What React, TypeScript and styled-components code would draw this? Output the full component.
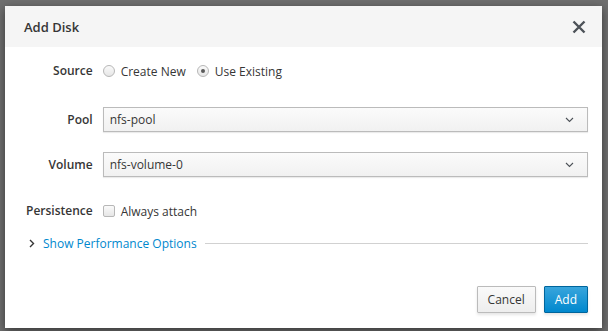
import React from "react";
import styled, { createGlobalStyle } from "styled-components";

const Global = createGlobalStyle`
  html, body { margin: 0; padding: 0; }
  body {
    background: #6f6f6f;
    font-family: "Open Sans", "Liberation Sans", sans-serif;
    font-size: 12px;
    color: #363636;
  }
`;

const Backdrop = styled.div`
  height: 331px;
  box-sizing: border-box;
  padding: 6px 6px 3px 5px;
  background: #6f6f6f;
  overflow: hidden;
`;

const Modal = styled.div`
  height: 322px;
  background: #fff;
  box-shadow: 0 3px 9px rgba(0, 0, 0, 0.5);
  display: flex;
  flex-direction: column;
`;

const Header = styled.div`
  height: 41px;
  box-sizing: border-box;
  background: #f5f5f5;
  display: flex;
  align-items: center;
  justify-content: space-between;
  padding: 0 15px 0 19px;
`;

const Title = styled.h1`
  margin: 0;
  font-size: 13px;
  font-weight: 600;
  color: #363636;
`;

const Close = styled.button`
  border: 0;
  background: none;
  padding: 0;
  width: 16px;
  height: 16px;
  display: flex;
  align-items: center;
  justify-content: center;
  cursor: pointer;
`;

const Body = styled.div`
  flex: 1;
  padding: 12px 14px 0 21px;
`;

const Form = styled.div`
  display: grid;
  grid-template-columns: max-content 1fr;
  column-gap: 10px;
  align-items: center;
`;

const Label = styled.label<{ $gap: number }>`
  text-align: right;
  margin-top: ${(p) => p.$gap}px;
  line-height: 24px;
  font-weight: 600;
  color: #363636;
`;

const Control = styled.div<{ $gap: number }>`
  margin-top: ${(p) => p.$gap}px;
  display: flex;
  align-items: center;
  min-height: 24px;
`;

const Option = styled.span`
  display: inline-flex;
  align-items: center;
  gap: 6px;
  margin-right: 11px;
`;

const Radio = styled.span<{ $checked?: boolean }>`
  width: 12px;
  height: 12px;
  box-sizing: border-box;
  border-radius: 50%;
  border: 1px solid #b7b7b7;
  background: linear-gradient(#fafafa, #e6e6e6);
  display: inline-flex;
  align-items: center;
  justify-content: center;
  &::after {
    content: "";
    width: 4px;
    height: 4px;
    border-radius: 50%;
    background: ${(p) => (p.$checked ? "#5a5a5a" : "transparent")};
  }
`;

const Checkbox = styled.span`
  width: 12px;
  height: 12px;
  box-sizing: border-box;
  border-radius: 2px;
  border: 1px solid #b7b7b7;
  background: linear-gradient(#fafafa, #e6e6e6);
`;

const Select = styled.div`
  flex: 1;
  height: 25px;
  box-sizing: border-box;
  border: 1px solid #bbb;
  background: linear-gradient(#fbfbfb, #f1f1f1);
  box-shadow: 0 1px 1px rgba(3, 3, 3, 0.08);
  display: flex;
  align-items: center;
  justify-content: space-between;
  padding: 0 13px 0 6px;
  color: #363636;
`;

const Expander = styled.div`
  display: flex;
  align-items: center;
  margin-top: 12px;
  padding-left: 3px;
`;

const Link = styled.a`
  color: #0088ce;
  text-decoration: none;
  margin-left: 8px;
  margin-right: 8px;
`;

const Rule = styled.div`
  flex: 1;
  height: 1px;
  background: #d1d1d1;
`;

const Footer = styled.div`
  display: flex;
  justify-content: flex-end;
  gap: 8px;
  padding: 0 14px 15px 0;
`;

const Button = styled.button<{ $primary?: boolean }>`
  height: 27px;
  box-sizing: border-box;
  padding: 0 10px;
  font-family: "Open Sans", "Liberation Sans", sans-serif;
  font-size: 12px;
  border-radius: 1px;
  border: 1px solid ${(p) => (p.$primary ? "#00659c" : "#bbb")};
  color: ${(p) => (p.$primary ? "#fff" : "#363636")};
  background: ${(p) =>
    p.$primary
      ? "linear-gradient(#39a5dc, #0088ce)"
      : "linear-gradient(#fafafa, #ededed)"};
  box-shadow: 0 2px 3px rgba(3, 3, 3, 0.1);
`;

const Chevron = () => (
  <svg width="9" height="6" viewBox="0 0 9 6">
    <path d="M1 1 L4.5 4.5 L8 1" fill="none" stroke="#4d5258" strokeWidth="1.1" />
  </svg>
);

export default function App() {
  return (
    <>
      <Global />
      <Backdrop>
        <Modal>
          <Header>
            <Title>Add Disk</Title>
            <Close aria-label="Close">
              <svg width="14" height="14" viewBox="0 0 14 14">
                <path d="M1.5 1.5 L12.5 12.5 M12.5 1.5 L1.5 12.5" stroke="#4d5258" strokeWidth="2.4" />
              </svg>
            </Close>
          </Header>
          <Body>
            <Form>
              <Label $gap={0}>Source</Label>
              <Control $gap={0}>
                <Option>
                  <Radio />
                  Create New
                </Option>
                <Option>
                  <Radio $checked />
                  Use Existing
                </Option>
              </Control>
              <Label $gap={24}>Pool</Label>
              <Control $gap={24}>
                <Select>
                  nfs-pool
                  <Chevron />
                </Select>
              </Control>
              <Label $gap={20}>Volume</Label>
              <Control $gap={20}>
                <Select>
                  nfs-volume-0
                  <Chevron />
                </Select>
              </Control>
              <Label $gap={22}>Persistence</Label>
              <Control $gap={22}>
                <Option>
                  <Checkbox />
                  Always attach
                </Option>
              </Control>
            </Form>
            <Expander>
              <svg width="6" height="9" viewBox="0 0 6 9">
                <path d="M1 1 L4.5 4.5 L1 8" fill="none" stroke="#363636" strokeWidth="1.4" />
              </svg>
              <Link href="#">Show Performance Options</Link>
              <Rule />
            </Expander>
          </Body>
          <Footer>
            <Button>Cancel</Button>
            <Button $primary>Add</Button>
          </Footer>
        </Modal>
      </Backdrop>
    </>
  );
}
